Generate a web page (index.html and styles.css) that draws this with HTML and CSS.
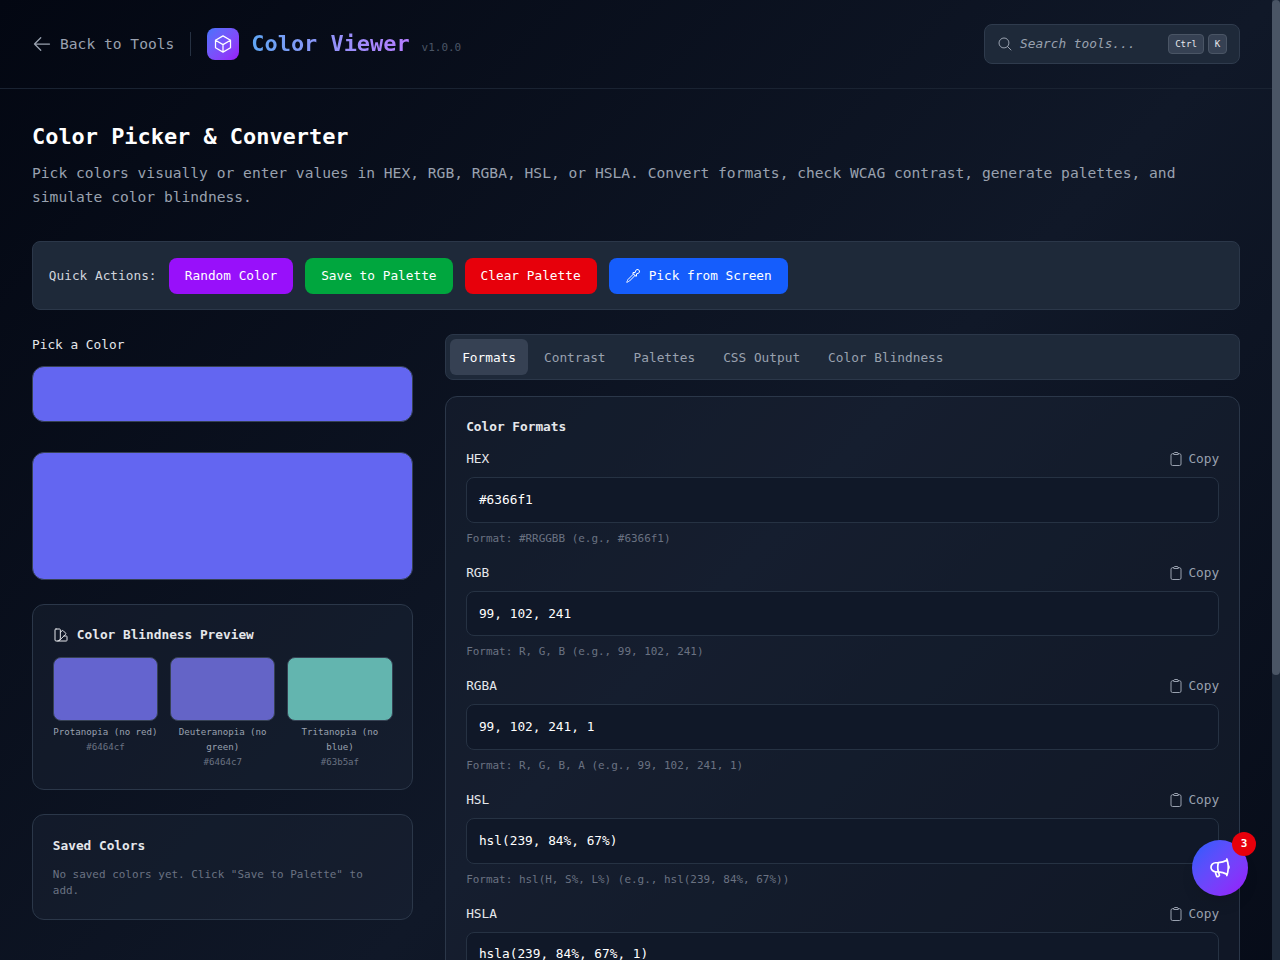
FILE: index.html
```html
<!DOCTYPE html>
<html lang="en">

<head>
    <meta charset="UTF-8">
    <meta name="viewport" content="width=device-width, initial-scale=1.0">
    <title>Color Viewer</title>
    <link rel="stylesheet" href="styles.css">
</head>

<body>
    <!-- shared icons -->
    <svg class="defs">
        <symbol id="clipboard" viewBox="0 0 24 24">
            <path d="M15.666 3.888A2.25 2.25 0 0 0 13.5 2.25h-3c-1.03 0-1.9.693-2.166 1.638m7.332 0c.055.194.084.4.084.612v0a.75.75 0 0 1-.75.75H9a.75.75 0 0 1-.75-.75v0c0-.212.03-.418.084-.612m7.332 0c.646.049 1.288.11 1.927.184 1.1.128 1.907 1.077 1.907 2.185V19.5a2.25 2.25 0 0 1-2.25 2.25H6.75A2.25 2.25 0 0 1 4.5 19.5V6.257c0-1.108.806-2.057 1.907-2.185a48.208 48.208 0 0 1 1.927-.184" />
        </symbol>
    </svg>

    <header class="topbar">
        <div class="brand">
            <a class="back">
                <svg class="icon icon-md" viewBox="0 0 24 24"><path d="M10.5 19.5 3 12m0 0 7.5-7.5M3 12h18" /></svg>
                Back to Tools
            </a>
            <span class="divider"></span>
            <span class="logo">
                <svg class="icon icon-md" viewBox="0 0 24 24"><path d="m21 7.5-9-5.25L3 7.5m18 0-9 5.25m9-5.25v9l-9 5.25M3 7.5l9 5.25M3 7.5v9l9 5.25m0-9v9" /></svg>
            </span>
            <div class="name">
                <h1>Color Viewer</h1>
                <span class="version">v1.0.0</span>
            </div>
        </div>
        <div class="search">
            <svg class="icon" viewBox="0 0 24 24"><path d="m21 21-5.197-5.197m0 0A7.5 7.5 0 1 0 5.196 5.196a7.5 7.5 0 0 0 10.607 10.607Z" /></svg>
            <span class="placeholder">Search tools...</span>
            <kbd>Ctrl</kbd>
            <kbd>K</kbd>
        </div>
    </header>

    <main>
        <h2>Color Picker &amp; Converter</h2>
        <p class="intro">Pick colors visually or enter values in HEX, RGB, RGBA, HSL, or HSLA. Convert formats, check WCAG contrast, generate palettes, and simulate color blindness.</p>

        <div class="actions">
            <span class="actions-label">Quick Actions:</span>
            <button class="btn purple">Random Color</button>
            <button class="btn green">Save to Palette</button>
            <button class="btn red">Clear Palette</button>
            <button class="btn blue">
                <svg class="icon" viewBox="0 0 24 24"><path d="m15 11.25 1.5 1.5.75-.75V8.758l2.276-.61a3 3 0 1 0-3.675-3.675l-.61 2.277H12l-.75.75 1.5 1.5M15 11.25l-8.47 8.47c-.34.34-.8.53-1.28.53s-.94.19-1.28.53l-.97.97-.75-.75.97-.97c.34-.34.53-.8.53-1.28s.19-.94.53-1.28L12.75 9M15 11.25 12.75 9" /></svg>
                Pick from Screen
            </button>
        </div>

        <div class="columns">
            <section class="left">
                <div class="pick-label">Pick a Color</div>
                <div class="picker"></div>
                <div class="preview"></div>

                <div class="card blindness">
                    <h3>
                        <svg class="icon" viewBox="0 0 24 24"><path d="M4.5 3h5.25c.8 0 1.25.5 1.25 1.25V17a4 4 0 0 1-4 4H4.5C3.6 21 3 20.5 3 19.5v-15C3 3.6 3.6 3 4.5 3ZM7 21h13c.6 0 1-.5 1-1v-5.5c0-.6-.4-1-1-1h-3.5M11 8l2.6-2.4c.5-.5 1.2-.5 1.7 0l3.6 3.6c.5.5.5 1.2 0 1.7l-9.2 9.2" /></svg>
                        Color Blindness Preview
                    </h3>
                    <div class="swatches">
                        <div>
                            <div class="swatch protan"></div>
                            <div class="type">Protanopia (no red)</div>
                            <div class="hex">#6464cf</div>
                        </div>
                        <div>
                            <div class="swatch deuter"></div>
                            <div class="type">Deuteranopia (no green)</div>
                            <div class="hex">#6464c7</div>
                        </div>
                        <div>
                            <div class="swatch tritan"></div>
                            <div class="type">Tritanopia (no blue)</div>
                            <div class="hex">#63b5af</div>
                        </div>
                    </div>
                </div>

                <div class="card saved">
                    <h3>Saved Colors</h3>
                    <p>No saved colors yet. Click "Save to Palette" to add.</p>
                </div>
            </section>

            <section class="right">
                <nav class="tabs">
                    <a class="tab active">Formats</a>
                    <a class="tab">Contrast</a>
                    <a class="tab">Palettes</a>
                    <a class="tab">CSS Output</a>
                    <a class="tab">Color Blindness</a>
                </nav>

                <div class="card formats">
                    <h3>Color Formats</h3>
                    <div class="field">
                        <div class="field-head">HEX <a class="copy"><svg class="icon"><use href="#clipboard" /></svg>Copy</a></div>
                        <div class="value">#6366f1</div>
                        <div class="hint">Format: #RRGGBB (e.g., #6366f1)</div>
                    </div>
                    <div class="field">
                        <div class="field-head">RGB <a class="copy"><svg class="icon"><use href="#clipboard" /></svg>Copy</a></div>
                        <div class="value">99, 102, 241</div>
                        <div class="hint">Format: R, G, B (e.g., 99, 102, 241)</div>
                    </div>
                    <div class="field">
                        <div class="field-head">RGBA <a class="copy"><svg class="icon"><use href="#clipboard" /></svg>Copy</a></div>
                        <div class="value">99, 102, 241, 1</div>
                        <div class="hint">Format: R, G, B, A (e.g., 99, 102, 241, 1)</div>
                    </div>
                    <div class="field">
                        <div class="field-head">HSL <a class="copy"><svg class="icon"><use href="#clipboard" /></svg>Copy</a></div>
                        <div class="value">hsl(239, 84%, 67%)</div>
                        <div class="hint">Format: hsl(H, S%, L%) (e.g., hsl(239, 84%, 67%))</div>
                    </div>
                    <div class="field">
                        <div class="field-head">HSLA <a class="copy"><svg class="icon"><use href="#clipboard" /></svg>Copy</a></div>
                        <div class="value">hsla(239, 84%, 67%, 1)</div>
                    </div>
                </div>
            </section>
        </div>
    </main>

    <div class="fab">
        <svg class="icon icon-lg" viewBox="0 0 24 24"><path d="M10.34 15.84c-.688-.06-1.386-.09-2.09-.09H7.5a4.5 4.5 0 1 1 0-9h.75c.704 0 1.402-.03 2.09-.09m0 9.18c.253.962.584 1.892.985 2.783.247.55.06 1.21-.463 1.511l-.657.38c-.551.318-1.26.117-1.527-.461a20.845 20.845 0 0 1-1.44-4.282m3.102.069a18.03 18.03 0 0 1-.59-4.59c0-1.586.205-3.124.59-4.59m0 9.18a23.848 23.848 0 0 1 8.835 2.535M10.34 6.66a23.847 23.847 0 0 0 8.835-2.535m0 0A23.74 23.74 0 0 0 18.795 3m.38 1.125a23.91 23.91 0 0 1 1.014 5.395m-1.014 8.855c-.118.38-.245.754-.38 1.125m.38-1.125a23.91 23.91 0 0 0 1.014-5.395m0-3.46c.495.413.811 1.035.811 1.73 0 .695-.316 1.317-.811 1.73m0-3.46a24.347 24.347 0 0 1 0 3.46" /></svg>
        <span class="badge">3</span>
    </div>
    <div class="scrollbar"><div class="thumb"></div></div>
</body>

</html>
```

FILE: styles.css
```css
* {
    box-sizing: border-box;
    margin: 0;
    padding: 0;
}

:root {
    /* type scale, sized for a 0.55em wide monospace */
    --fs-2xs: 9.13px;
    --fs-xs: 10.96px;
    --fs-sm: 12.79px;
    --fs-base: 14.61px;
    --fs-2xl: 21.92px;

    --gray-300: #d1d5dc;
    --gray-400: #99a1af;
    --gray-500: #6a7282;
    --gray-600: #4a5565;
    --gray-700: #364153;
    --gray-800: #1e2939;
    --gray-900: #101828;
}

html {
    height: 960px;
    overflow: hidden;
}

body {
    height: 960px;
    padding-right: 8px;
    overflow: hidden;
    font-family: "DejaVu Sans Mono", monospace;
    font-size: var(--fs-sm);
    line-height: 20px;
    color: #e5e7eb;
    background: #030712 linear-gradient(to bottom right, #030712, #101828, #030712) 0 0 / 1272px 1365px no-repeat;
}

.defs {
    display: none;
}

.icon {
    flex: none;
    width: 16px;
    height: 16px;
    fill: none;
    stroke: currentColor;
    stroke-width: 1.5;
    stroke-linecap: round;
    stroke-linejoin: round;
}

.icon-md {
    width: 20px;
    height: 20px;
}

.icon-lg {
    width: 24px;
    height: 24px;
    stroke-width: 1.7;
}

/* header */
.topbar {
    display: flex;
    justify-content: space-between;
    align-items: center;
    height: 89px;
    padding: 0 32px;
    border-bottom: 1px solid #1a2332;
}

.brand {
    display: flex;
    align-items: center;
}

.back {
    display: flex;
    align-items: center;
    gap: 8px;
    font-size: var(--fs-base);
    color: var(--gray-400);
}

.divider {
    width: 1px;
    height: 24px;
    margin: 0 16px;
    background: #263142;
}

.logo {
    display: flex;
    justify-content: center;
    align-items: center;
    width: 32px;
    height: 32px;
    margin-right: 12px;
    border-radius: 8px;
    color: #fff;
    background: linear-gradient(to bottom right in oklab, #4472fb, #9810fa);
}

.name {
    display: flex;
    align-items: baseline;
    gap: 12px;
}

.name h1 {
    font-size: var(--fs-2xl);
    line-height: 32px;
    color: transparent;
    background: linear-gradient(to right in oklab, #5ea6f4, #b57cff);
    -webkit-background-clip: text;
    background-clip: text;
}

.version {
    font-size: var(--fs-xs);
    color: var(--gray-600);
}

.search {
    display: flex;
    align-items: center;
    width: 256px;
    height: 40px;
    padding: 0 12px;
    border: 1px solid #2f3b4d;
    border-radius: 8px;
    color: var(--gray-400);
    background: var(--gray-800);
}

.placeholder {
    flex: 1;
    margin-left: 7px;
    font-style: italic;
}

kbd {
    height: 20px;
    margin-left: 4px;
    padding: 0 5.8px;
    border: 1px solid var(--gray-600);
    border-radius: 4px;
    font-family: inherit;
    font-size: var(--fs-2xs);
    line-height: 18px;
    color: #e5e7eb;
    background: var(--gray-700);
}

/* page */
main {
    padding: 31.8px 32px 0;
}

h2 {
    margin-bottom: 8px;
    font-size: var(--fs-2xl);
    line-height: 32px;
    color: #fff;
}

.intro {
    margin-bottom: 32px;
    font-size: var(--fs-base);
    line-height: 24px;
    color: var(--gray-400);
}

.actions {
    display: flex;
    align-items: center;
    gap: 12px;
    height: 69.6px;
    margin-bottom: 24px;
    padding: 0 15.8px;
    border: 1px solid #2b3749;
    border-radius: 8px;
    background: var(--gray-800);
}

.actions-label {
    width: 108px;
    color: var(--gray-300);
}

.btn {
    display: flex;
    align-items: center;
    gap: 8px;
    height: 36px;
    padding: 0 16px;
    border: 0;
    border-radius: 8px;
    font: inherit;
    color: #fff;
}

.purple { background: #9810fa; }
.green { background: #00a63e; }
.red { background: #e7000b; }
.blue { background: #155dfc; }

.columns {
    display: grid;
    grid-template-columns: 381.33px 1fr;
    gap: 32px;
}

.pick-label {
    padding-top: 0.6px;
    margin-bottom: 11.4px;
}

.picker,
.preview {
    border: 1px solid var(--gray-700);
    border-radius: 12px;
    background: #6366f1;
}

.picker {
    height: 56px;
    margin-bottom: 30px;
}

.preview {
    height: 128px;
    margin-bottom: 23.6px;
}

.card {
    padding: 19.8px;
    border: 1px solid #2b3749;
    border-radius: 12px;
    background: rgba(30, 41, 57, .4);
}

h3 {
    display: flex;
    align-items: center;
    gap: 8px;
    margin-bottom: 12px;
    font-size: var(--fs-sm);
}

.blindness {
    height: 186px;
    margin-bottom: 24px;
}

.swatches {
    display: grid;
    grid-template-columns: repeat(3, 1fr);
    gap: 12px;
    font-size: var(--fs-2xs);
    line-height: 15px;
    text-align: center;
}

.swatch {
    height: 64px;
    margin-bottom: 4px;
    border: 1px solid var(--gray-700);
    border-radius: 8px;
}

.protan { background: #6464cf; }
.deuter { background: #6464c7; }
.tritan { background: #63b5af; }

.type {
    color: var(--gray-400);
}

.hex {
    color: var(--gray-500);
}

.saved {
    height: 105.6px;
    padding-top: 20.6px;
}

.saved h3 {
    margin-bottom: 11.2px;
}

.saved p {
    font-size: var(--fs-xs);
    line-height: 16px;
    color: var(--gray-500);
}

/* tabs */
.tabs {
    display: flex;
    gap: 4px;
    height: 45.6px;
    margin-bottom: 16px;
    padding: 3.8px;
    border: 1px solid #2b3749;
    border-radius: 8px;
    background: var(--gray-800);
}

.tab {
    height: 36px;
    padding: 8.6px 12px 0;
    border-radius: 6px;
    color: var(--gray-400);
}

.tab.active {
    color: #fff;
    background: var(--gray-700);
}

/* format fields */
.formats h3 {
    margin-bottom: 12.4px;
}

.field {
    margin-bottom: 16px;
}

.field-head {
    display: flex;
    justify-content: space-between;
    margin-bottom: 8px;
}

.copy {
    display: flex;
    align-items: center;
    gap: 4px;
    color: var(--gray-400);
}

.value {
    height: 45.6px;
    margin-bottom: 8px;
    padding: 11.8px;
    border: 1px solid #263243;
    border-radius: 8px;
    color: #fff;
    background: var(--gray-900);
}

.hint {
    font-size: var(--fs-xs);
    line-height: 16px;
    color: var(--gray-500);
}

/* floating button and page scrollbar sit over the content */
.fab {
    position: fixed;
    right: 32px;
    bottom: 64px;
    display: flex;
    justify-content: center;
    align-items: center;
    width: 56px;
    height: 56px;
    border-radius: 50%;
    color: #fff;
    background: linear-gradient(to bottom right in oklab, #155dfc, #9810fa);
    box-shadow: 0 10px 15px -3px rgba(0, 0, 0, .1), 0 4px 6px -4px rgba(0, 0, 0, .1);
}

.badge {
    position: absolute;
    top: -8px;
    right: -8px;
    width: 24px;
    height: 24px;
    border-radius: 50%;
    font-size: var(--fs-xs);
    font-weight: bold;
    line-height: 23px;
    text-align: center;
    background: #e7000b;
}

.scrollbar {
    position: fixed;
    top: 0;
    right: 0;
    width: 8px;
    height: 960px;
    background: var(--gray-800);
}

.thumb {
    height: 675px;
    border-radius: 4px;
    background: var(--gray-600);
}
```
